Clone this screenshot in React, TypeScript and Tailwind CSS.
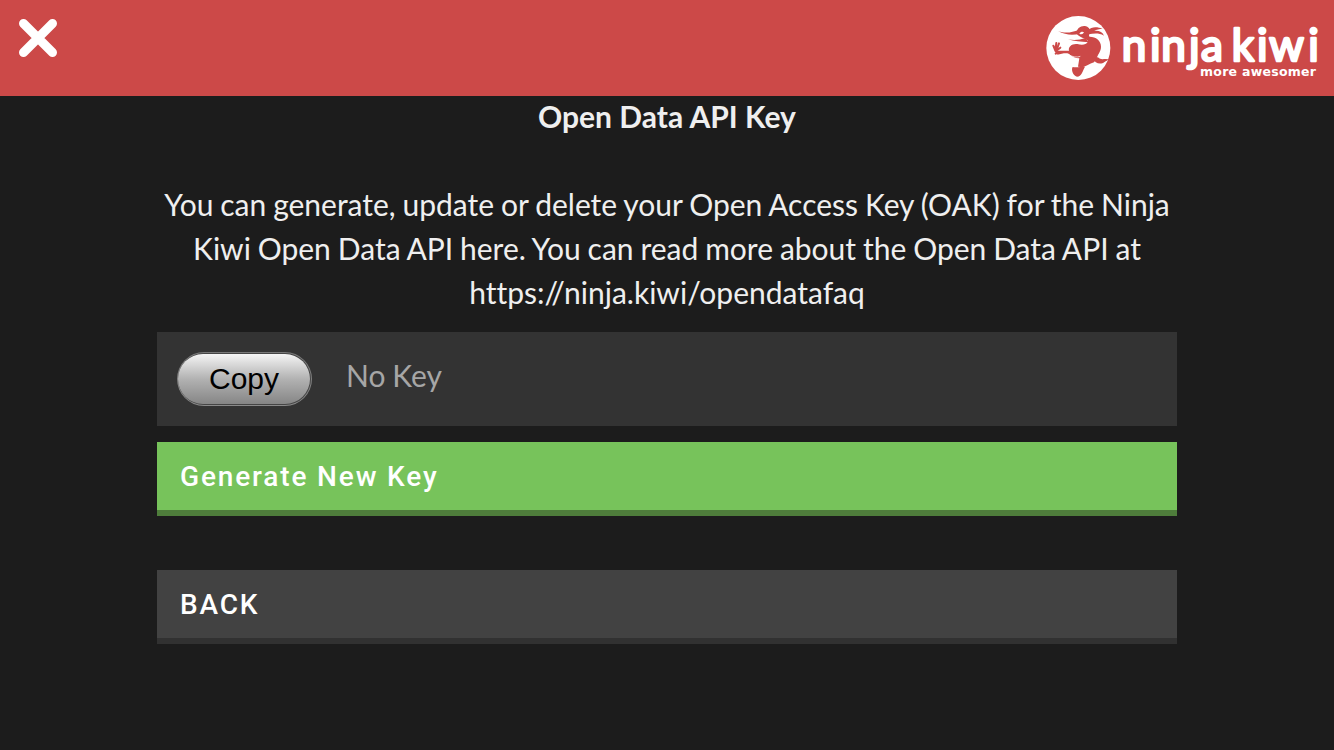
function CloseIcon() {
  return (
    <svg width="38" height="38" viewBox="0 0 38 38" aria-hidden="true">
      <path d="M4.5 4.5 L33.5 33.5 M33.5 4.5 L4.5 33.5" stroke="#fff" strokeWidth="9" strokeLinecap="round" />
    </svg>
  );
}

function KiwiMark() {
  return (
    <svg width="76" height="76" viewBox="0 0 228 228" aria-hidden="true" className="shrink-0">
      <circle cx="115" cy="114" r="96" fill="#fff" />
      <g fill="#cc4948" stroke="none">
        <path d="M110 72 C108 56 122 47 134 48 C146 49 152 58 149 68 C148 74 145 77 149 80 C168 80 183 92 183 110 C183 126 172 134 170 146 L162 157 C148 162 138 168 128 172 L114 170 L118 145 C104 144 95 139 86 131 C77 128 65 131 52 134 L50 122 L87 122 C84 109 97 100 112 102 C127 106 138 104 143 96 C148 86 126 88 110 72 Z" />
        <path d="M54 63 C76 72 97 67 115 60 L119 71 C98 77 76 75 54 63 Z" />
        <path d="M84 88 C102 91 119 90 137 84 L146 97 C122 95 103 94 84 88 Z" />
        <path d="M143 61 C157 47 173 52 188 55 C177 59 170 58 162 63 C176 61 188 66 192 77 C176 68 160 71 146 73 Z" />
        <path d="M157 143 L174 142 C185 153 194 143 209 149 C199 151 198 154 187 160 C174 163 165 158 157 143 Z" />
        <path d="M98 171 C108 174 122 170 135 170 C127 184 125 200 111 200 C98 197 93 178 98 171 Z" />
      </g>
      <path
        d="M56 127 L46 122 L40 107 M46 121 L49 99 M49 122 L57 100 M47 124 L61 113 M55 127 L47 131"
        fill="none"
        stroke="#cc4948"
        strokeWidth="6"
        strokeLinecap="round"
        strokeLinejoin="round"
      />
      <path d="M118 71 C122 65 128 64 132 67 C129 73 124 74 118 71 Z" fill="#fff" />
      <path d="M86 134 C98 141 111 143 121 139" stroke="#fff" strokeWidth="2" fill="none" />
    </svg>
  );
}

function Wordmark() {
  return (
    <svg width="210" height="60" viewBox="1116 20 210 60" className="shrink-0 overflow-visible">
      <text
        x="1134 1155.3 1173.5 1194.3 1212 1243 1262.3 1286.6 1313.6"
        y="61"
        fill="#fff"
        stroke="#fff"
        strokeWidth="2.6"
        strokeLinejoin="round"
        textAnchor="middle"
        className="font-['Lato',sans-serif] text-[44px]"
      >
        ninjakiwi
      </text>
      <text
        x="1200"
        y="75.5"
        fill="#fff"
        textLength="116"
        className="font-['DejaVu_Sans',sans-serif] text-[12.5px] font-bold"
      >
        more awesomer
      </text>
    </svg>
  );
}

export default function App() {
  return (
    <div className="flex h-[750px] w-full flex-col overflow-hidden bg-[#1c1c1c] font-['Lato',sans-serif] text-[#efefef]">
      <header className="flex h-24 shrink-0 items-start justify-between bg-[#cc4948]">
        <button aria-label="Close" className="mt-[19px] ml-[19px]">
          <CloseIcon />
        </button>
        <div className="mt-[10px] mr-2 flex items-center">
          <KiwiMark />
          <div className="mt-1 flex">
            <Wordmark />
          </div>
        </div>
      </header>
      <main className="mx-auto flex w-[1020px] flex-col">
        <h1 className="h-[42px] text-center text-[30px] leading-[40px] font-bold">Open Data API Key</h1>
        <p className="mt-11 text-center text-[30px] leading-[44px] [font-variant-ligatures:none] [word-spacing:-0.8px]">
          You can generate, update or delete your Open Access Key (OAK) for the Ninja
          <br />
          Kiwi Open Data API here. You can read more about the Open Data API at
          <br />
          https://ninja.kiwi/opendatafaq
        </p>
        <div className="mt-[18px] flex h-[94px] items-center bg-[#333333] pl-5">
          <button className="flex h-[54px] w-[135px] rounded-full bg-linear-to-b from-[#777777] to-[#8a8a8a] p-px">
            <span className="flex size-full rounded-full bg-[#454545] pt-px pr-px pb-px">
              <span className="flex size-full items-center justify-center rounded-full bg-linear-to-b from-[#f5f5f5] via-[#b2b2b2] to-[#868686] font-['Liberation_Sans',Arial,sans-serif] text-[30px] leading-none text-black">
                Copy
              </span>
            </span>
          </button>
          <span className="ml-[34px] pb-[7px] text-[30px] text-[#a6a6a6] [word-spacing:-0.9px]">No Key</span>
        </div>
        <button className="mt-4 flex h-[74px] items-center border-b-[6px] border-[#4e7d3b] bg-[#77c35b] pt-0.5 pl-[23px] font-['Roboto',sans-serif] text-[28px] font-medium tracking-[1.85px] text-white">
          Generate New Key
        </button>
        <button className="mt-[54px] flex h-[74px] items-center border-b-[6px] border-[#313131] bg-[#424242] pt-0.5 pl-[23px] font-['Roboto',sans-serif] text-[28px] font-medium tracking-[1.85px] text-white">
          BACK
        </button>
      </main>
    </div>
  );
}
